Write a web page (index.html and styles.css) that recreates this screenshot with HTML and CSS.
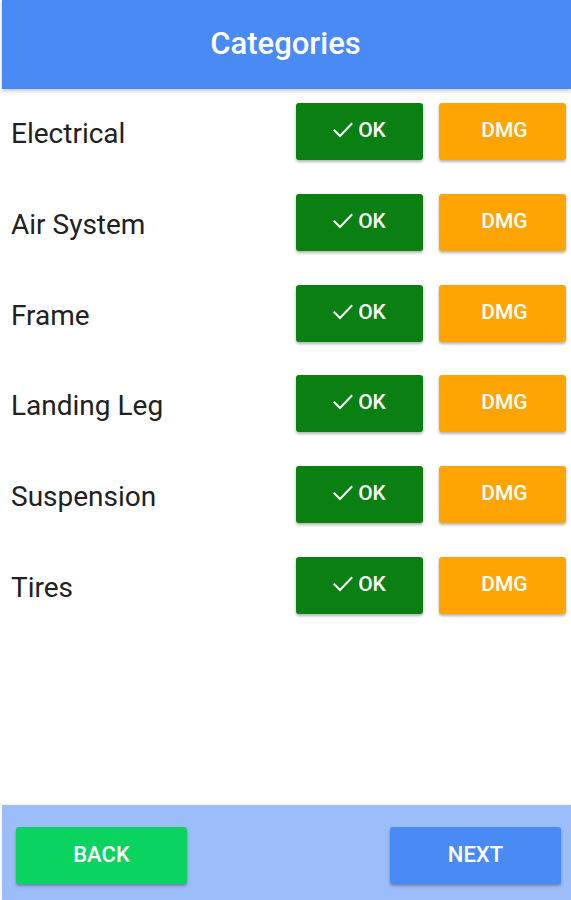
FILE: index.html
```html
<!DOCTYPE html>
<html>
<head>
<meta charset="utf-8">
<link rel="stylesheet" href="styles.css">
</head>
<body>
<div class="app">
  <header class="header"><h1 class="title">Categories</h1></header>
  <main class="list">
    <div class="row"><span class="label">Electrical</span><div class="actions"><button class="btn ok"><svg class="check" viewBox="0 0 20 16"><polyline points="1.5,8.5 7,14 18.5,2"/></svg>OK</button><button class="btn dmg">DMG</button></div></div>
    <div class="row"><span class="label">Air System</span><div class="actions"><button class="btn ok"><svg class="check" viewBox="0 0 20 16"><polyline points="1.5,8.5 7,14 18.5,2"/></svg>OK</button><button class="btn dmg">DMG</button></div></div>
    <div class="row"><span class="label">Frame</span><div class="actions"><button class="btn ok"><svg class="check" viewBox="0 0 20 16"><polyline points="1.5,8.5 7,14 18.5,2"/></svg>OK</button><button class="btn dmg">DMG</button></div></div>
    <div class="row"><span class="label">Landing Leg</span><div class="actions"><button class="btn ok"><svg class="check" viewBox="0 0 20 16"><polyline points="1.5,8.5 7,14 18.5,2"/></svg>OK</button><button class="btn dmg">DMG</button></div></div>
    <div class="row"><span class="label">Suspension</span><div class="actions"><button class="btn ok"><svg class="check" viewBox="0 0 20 16"><polyline points="1.5,8.5 7,14 18.5,2"/></svg>OK</button><button class="btn dmg">DMG</button></div></div>
    <div class="row"><span class="label">Tires</span><div class="actions"><button class="btn ok"><svg class="check" viewBox="0 0 20 16"><polyline points="1.5,8.5 7,14 18.5,2"/></svg>OK</button><button class="btn dmg">DMG</button></div></div>
  </main>
  <footer class="footer">
    <button class="btn nav back">BACK</button>
    <button class="btn nav next">NEXT</button>
  </footer>
</div>
</body>
</html>
```

FILE: styles.css
```css
* { box-sizing: border-box; }
html, body { margin: 0; padding: 0; background: #ffffff; }
body { font-family: Roboto, "Liberation Sans", sans-serif; }
.app {
  height: 900px;
  display: flex;
  flex-direction: column;
  padding-left: 2px;
}
.header {
  height: 89px;
  background: #4a8af4;
  display: flex;
  align-items: center;
  justify-content: center;
  box-shadow: 0 2px 4px rgba(0,0,0,0.22);
  position: relative;
  z-index: 1;
}
.title {
  margin: 0;
  color: #ffffff;
  font-size: 31px;
  font-weight: 500;
  padding-bottom: 2px;
  padding-right: 2px;
}
.list {
  flex: 1;
  padding: 14px 5px 0 9px;
  display: flex;
  flex-direction: column;
  gap: 33.8px;
}
.row {
  display: flex;
  align-items: center;
  justify-content: space-between;
  height: 57px;
}
.label {
  font-size: 28px;
  color: #212121;
  padding-top: 4px;
}
.actions {
  display: flex;
  gap: 16px;
}
.btn {
  border: none;
  border-radius: 3px;
  color: #ffffff;
  font-family: Roboto, "Liberation Sans", sans-serif;
  font-weight: 500;
  display: flex;
  align-items: center;
  justify-content: center;
  box-shadow: 0 2px 3px rgba(0,0,0,0.3);
  padding: 0;
}
.ok, .dmg {
  width: 127px;
  height: 57px;
  font-size: 21px;
  padding-bottom: 3px;
}
.dmg { padding-left: 4px; }
.ok { background: #0a7f12; }
.dmg { background: #ffa503; }
.check {
  width: 20px;
  height: 16px;
  margin-right: 5px;
  fill: none;
  stroke: #ffffff;
  stroke-width: 2;
  stroke-linecap: square;
}
.footer {
  height: 95px;
  background: #9dbcfa;
  display: flex;
  justify-content: space-between;
  align-items: flex-start;
  padding: 22px 10px 0 14px;
  box-shadow: 0 -1px 2px rgba(0,0,0,0.06);
}
.nav {
  width: 171px;
  height: 57px;
  font-size: 22px;
  padding-bottom: 2px;
}
.back { background: #0ad35f; }
.next { background: #4a8af4; }
```
